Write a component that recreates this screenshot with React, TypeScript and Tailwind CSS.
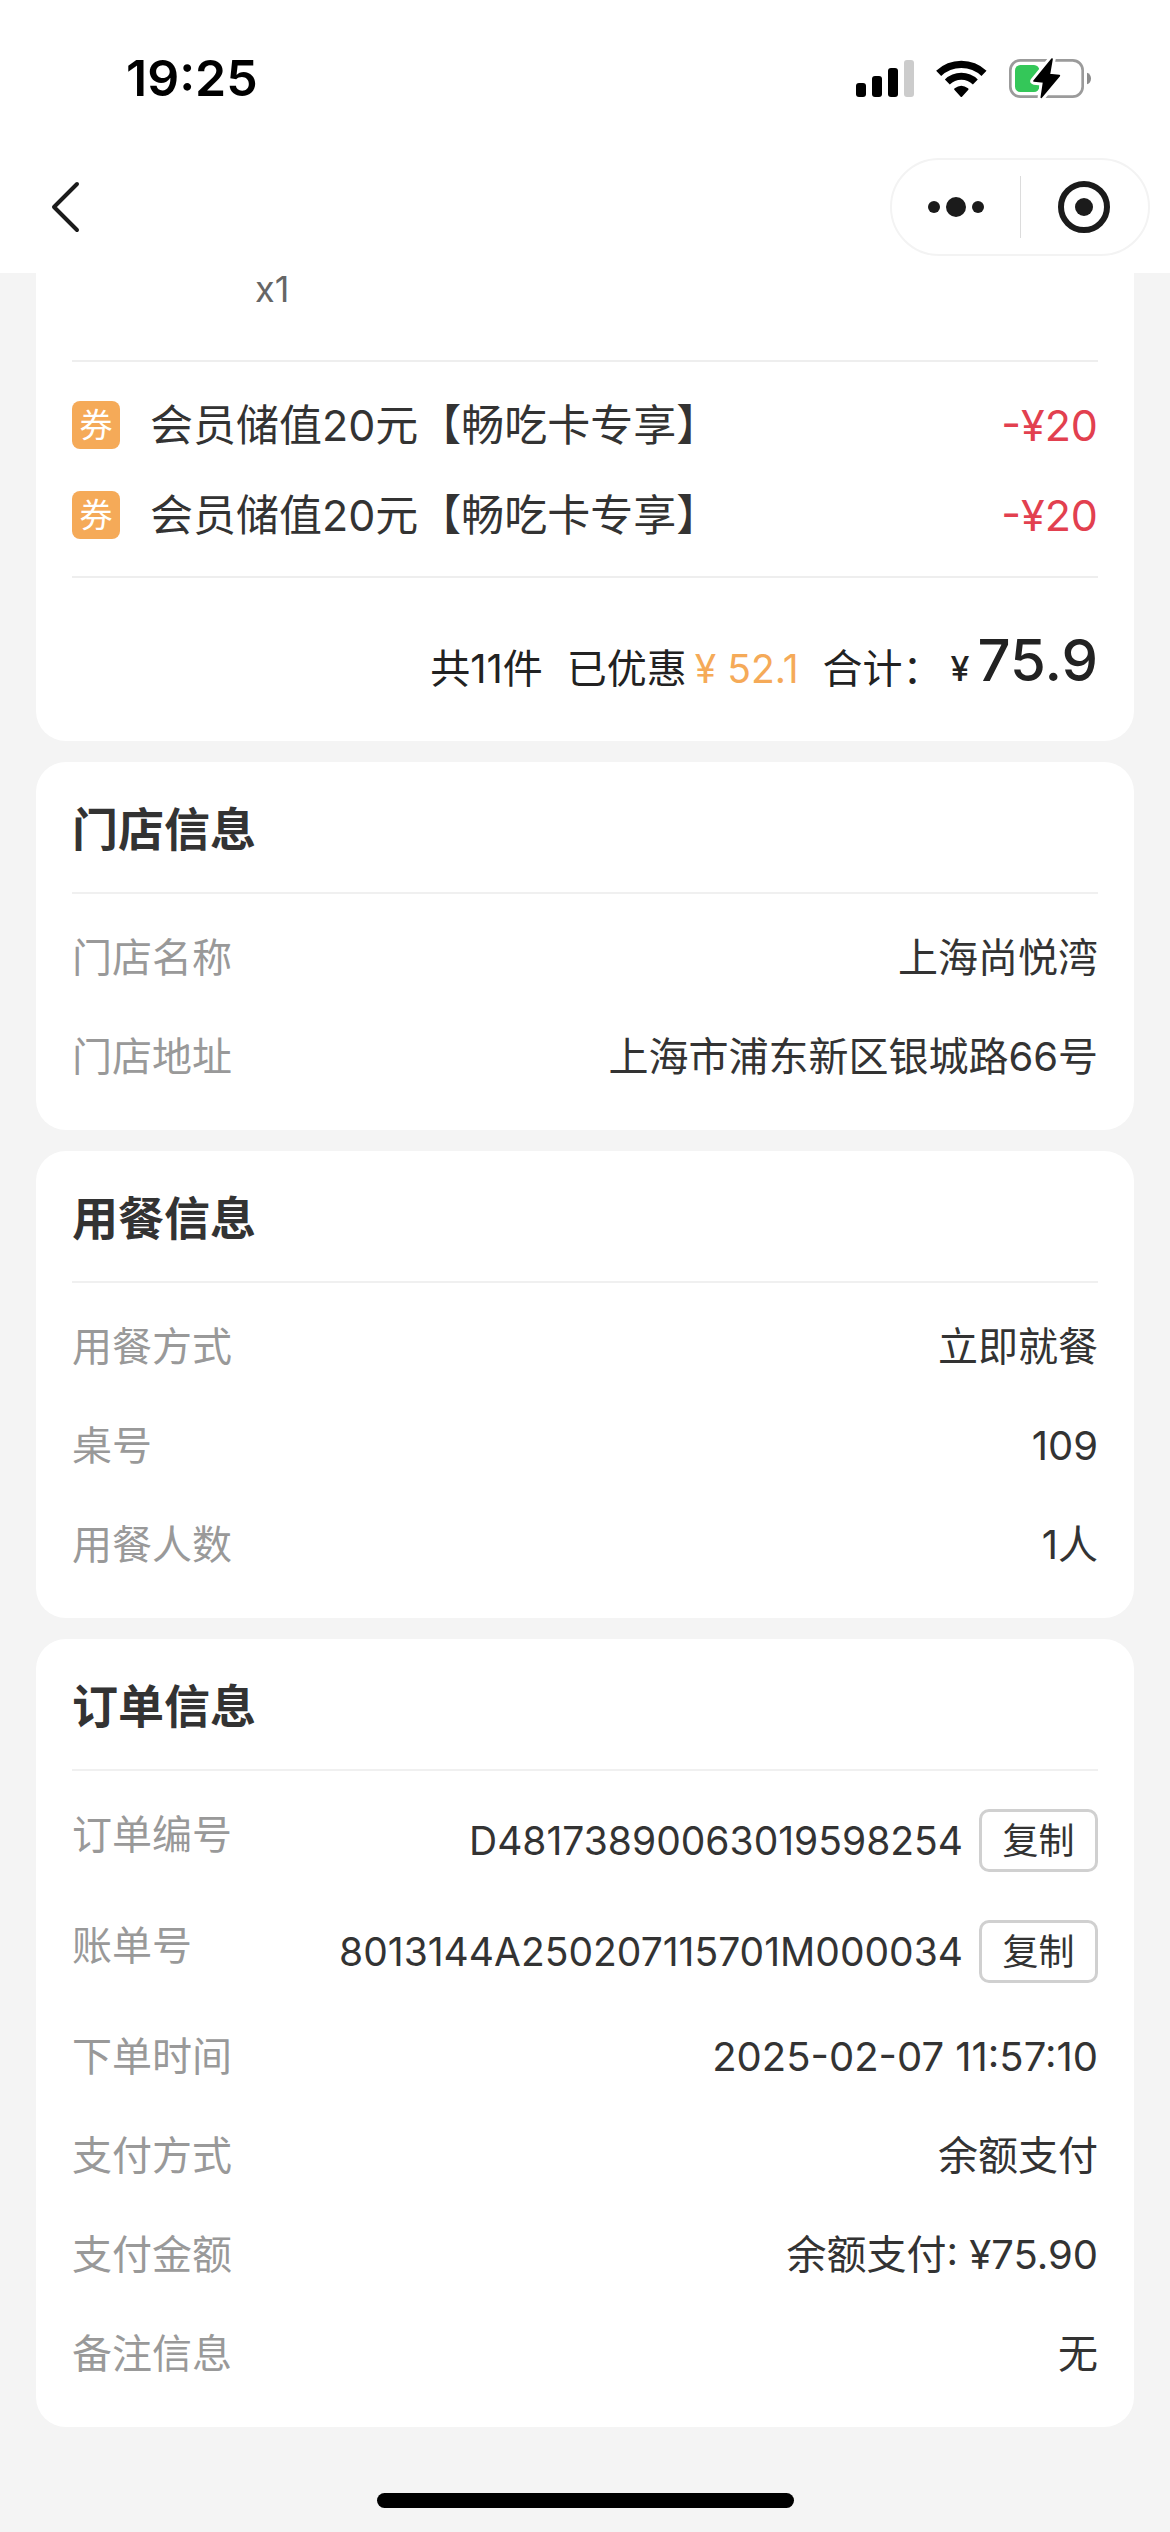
import { ReactNode } from 'react'

interface Coupon {
  id: number
  name: string
  amount: string
}

interface InfoItem {
  label: string
  value: string
  copyable?: boolean
}

const coupons: Coupon[] = [
  { id: 1, name: '会员储值20元【畅吃卡专享】', amount: '-¥20' },
  { id: 2, name: '会员储值20元【畅吃卡专享】', amount: '-¥20' },
]

const storeInfo: InfoItem[] = [
  { label: '门店名称', value: '上海尚悦湾' },
  { label: '门店地址', value: '上海市浦东新区银城路66号' },
]

const diningInfo: InfoItem[] = [
  { label: '用餐方式', value: '立即就餐' },
  { label: '桌号', value: '109' },
  { label: '用餐人数', value: '1人' },
]

const orderInfo: InfoItem[] = [
  { label: '订单编号', value: 'D48173890063019598254', copyable: true },
  { label: '账单号', value: '8013144A250207115701M000034', copyable: true },
  { label: '下单时间', value: '2025-02-07 11:57:10' },
  { label: '支付方式', value: '余额支付' },
  { label: '支付金额', value: '余额支付: ¥75.90' },
  { label: '备注信息', value: '无' },
]

function SignalIcon() {
  return (
    <svg className="w-[60px] h-[39px]" viewBox="105 174 180 117" aria-hidden="true">
      <rect x="108" y="246" width="30" height="42" rx="9" />
      <rect x="156" y="225" width="30" height="63" rx="9" />
      <rect x="204" y="201" width="30" height="87" rx="9" />
      <rect x="252" y="177" width="30" height="111" rx="9" fill="#cccccc" />
    </svg>
  )
}

function WifiIcon() {
  return (
    <svg className="w-[53px] h-[39px]" viewBox="345 174 159 117" aria-hidden="true">
      <path d="M356 217 A99 99 0 0 1 492 217" fill="none" stroke="#000" strokeWidth="22" />
      <path d="M382 243 A60 60 0 0 1 466 243" fill="none" stroke="#000" strokeWidth="21" />
      <path d="M403 266 Q401 264 404 262 Q424 247 444 262 Q447 264 445 266 L426 287 Q424 289 422 287 Z" />
    </svg>
  )
}

function BatteryIcon() {
  const bolt = 'M696 174 L642 240 L671 243 L664 289 L718 224 L688 221 Z'
  return (
    <svg className="w-[84px] h-[42px]" viewBox="564 168 252 126" aria-hidden="true">
      <rect x="571" y="178" width="217" height="109" rx="30" fill="none" stroke="#9b9b9b" strokeWidth="8" />
      <path d="M801 215 C817 219 817 246 801 250 Z" fill="#8c8c8c" />
      <rect x="585" y="192" width="73" height="81" rx="16" fill="#34c759" />
      <path d={bolt} fill="#fff" stroke="#fff" strokeWidth="22" strokeLinejoin="round" />
      <path d={bolt} stroke="#000" strokeWidth="5" strokeLinejoin="round" />
    </svg>
  )
}

function StatusBar() {
  return (
    <div className="flex h-[156px] items-center justify-between pl-[126px] pr-[78px]">
      <span className="text-[50px] leading-none font-semibold text-black">19:25</span>
      <div className="flex items-center gap-5">
        <SignalIcon />
        <WifiIcon />
        <BatteryIcon />
      </div>
    </div>
  )
}

function NavBar() {
  return (
    <div className="flex h-[117px] items-start justify-between pt-[2px] pl-[48px] pr-[20px]">
      <button type="button" aria-label="返回" className="flex h-[98px] w-[60px] items-center">
        <svg className="h-[54px] w-[36px]" viewBox="0 0 36 54" fill="none" stroke="#1b1b1b" strokeWidth="4" strokeLinecap="round">
          <path d="M29 4 L6 27 L29 50" strokeLinejoin="round" />
        </svg>
      </button>

      <div className="flex h-[98px] w-[260px] items-center rounded-full border-2 border-[#f3f3f3]">
        <button type="button" aria-label="更多" className="flex h-full flex-1 items-center justify-center gap-[6px]">
          <span className="size-3 rounded-full bg-[#1b1b1b]" />
          <span className="size-5 rounded-full bg-[#1b1b1b]" />
          <span className="size-3 rounded-full bg-[#1b1b1b]" />
        </button>
        <span className="h-[62px] w-px bg-[#dcdcdc]" />
        <button type="button" aria-label="关闭" className="flex h-full flex-1 items-center justify-center">
          <span className="flex size-[52px] items-center justify-center rounded-full border-6 border-[#1b1b1b]">
            <span className="size-[18px] rounded-full bg-[#1b1b1b]" />
          </span>
        </button>
      </div>
    </div>
  )
}

function InfoRow({ label, value, copyable }: InfoItem) {
  return (
    <div className="flex items-start justify-between py-6 text-[40px] leading-[51px]">
      <dt className="text-[#999999]">{label}</dt>
      <dd className="flex items-center gap-4 text-[#333333]">
        {copyable ? <span className="text-[39px]">{value}</span> : <span>{value}</span>}
        {copyable && (
          <button
            type="button"
            className="h-[63px] w-[119px] rounded-[10px] border-3 border-[#d0d0d0] text-[36px] leading-none"
          >
            复制
          </button>
        )}
      </dd>
    </div>
  )
}

function InfoCard({ title, children }: { title: string; children: ReactNode }) {
  return (
    <section className="rounded-[30px] bg-white px-9 pb-6">
      <h2 className="border-b-2 border-[#f0f0f0] pt-[38px] pb-[34px] text-[46px] leading-[58px] font-semibold text-[#333333]">
        {title}
      </h2>
      <dl className="pt-[14px]">{children}</dl>
    </section>
  )
}

function SummaryCard() {
  return (
    <section className="rounded-b-[30px] bg-white px-9">
      {/* Tail of the dish list, scrolled under the nav bar */}
      <div className="border-b-2 border-[#eeeeee] pb-[55px] pl-[183px] text-[36px] leading-8 text-[#666666]">
        x1
      </div>

      <ul className="border-b-2 border-[#eeeeee] pt-[18px] pb-4">
        {coupons.map(coupon => (
          <li key={coupon.id} className="flex h-[90px] items-center text-[43px] leading-none">
            <span className="flex size-12 items-center justify-center rounded-lg bg-[#f5aa58] text-[33px] text-white">
              券
            </span>
            <span className="ml-[30px] flex-1 text-[#333333]">{coupon.name}</span>
            <span className="text-[#e2404f]">{coupon.amount}</span>
          </li>
        ))}
      </ul>

      <div className="flex items-end justify-end pt-[46px] pb-[45px] text-[40px] leading-[54px] text-[#222222]">
        <span className="mr-6">共11件</span>
        <span>已优惠</span>
        <span className="mr-6 ml-2 text-[39px] text-[#f5aa58]">¥ 52.1</span>
        <span>合计：</span>
        <span className="mr-2 ml-2 text-[34px] font-medium">¥</span>
        <span className="text-[58px] leading-[72px] font-medium">75.9</span>
      </div>
    </section>
  )
}

export default function App() {
  return (
    <div className="flex min-h-screen flex-col bg-[#f4f4f4] font-['Inter','Noto_Sans_CJK_SC',sans-serif]">
      <header className="bg-white">
        <StatusBar />
        <NavBar />
      </header>

      <main className="flex flex-col gap-[21px] px-9">
        <SummaryCard />
        <InfoCard title="门店信息">
          {storeInfo.map(item => <InfoRow key={item.label} {...item} />)}
        </InfoCard>
        <InfoCard title="用餐信息">
          {diningInfo.map(item => <InfoRow key={item.label} {...item} />)}
        </InfoCard>
        <InfoCard title="订单信息">
          {orderInfo.map(item => <InfoRow key={item.label} {...item} />)}
        </InfoCard>
      </main>

      {/* Home indicator */}
      <div className="mx-auto mt-auto mb-6 h-[15px] w-[417px] rounded-full bg-black" />
    </div>
  )
}
